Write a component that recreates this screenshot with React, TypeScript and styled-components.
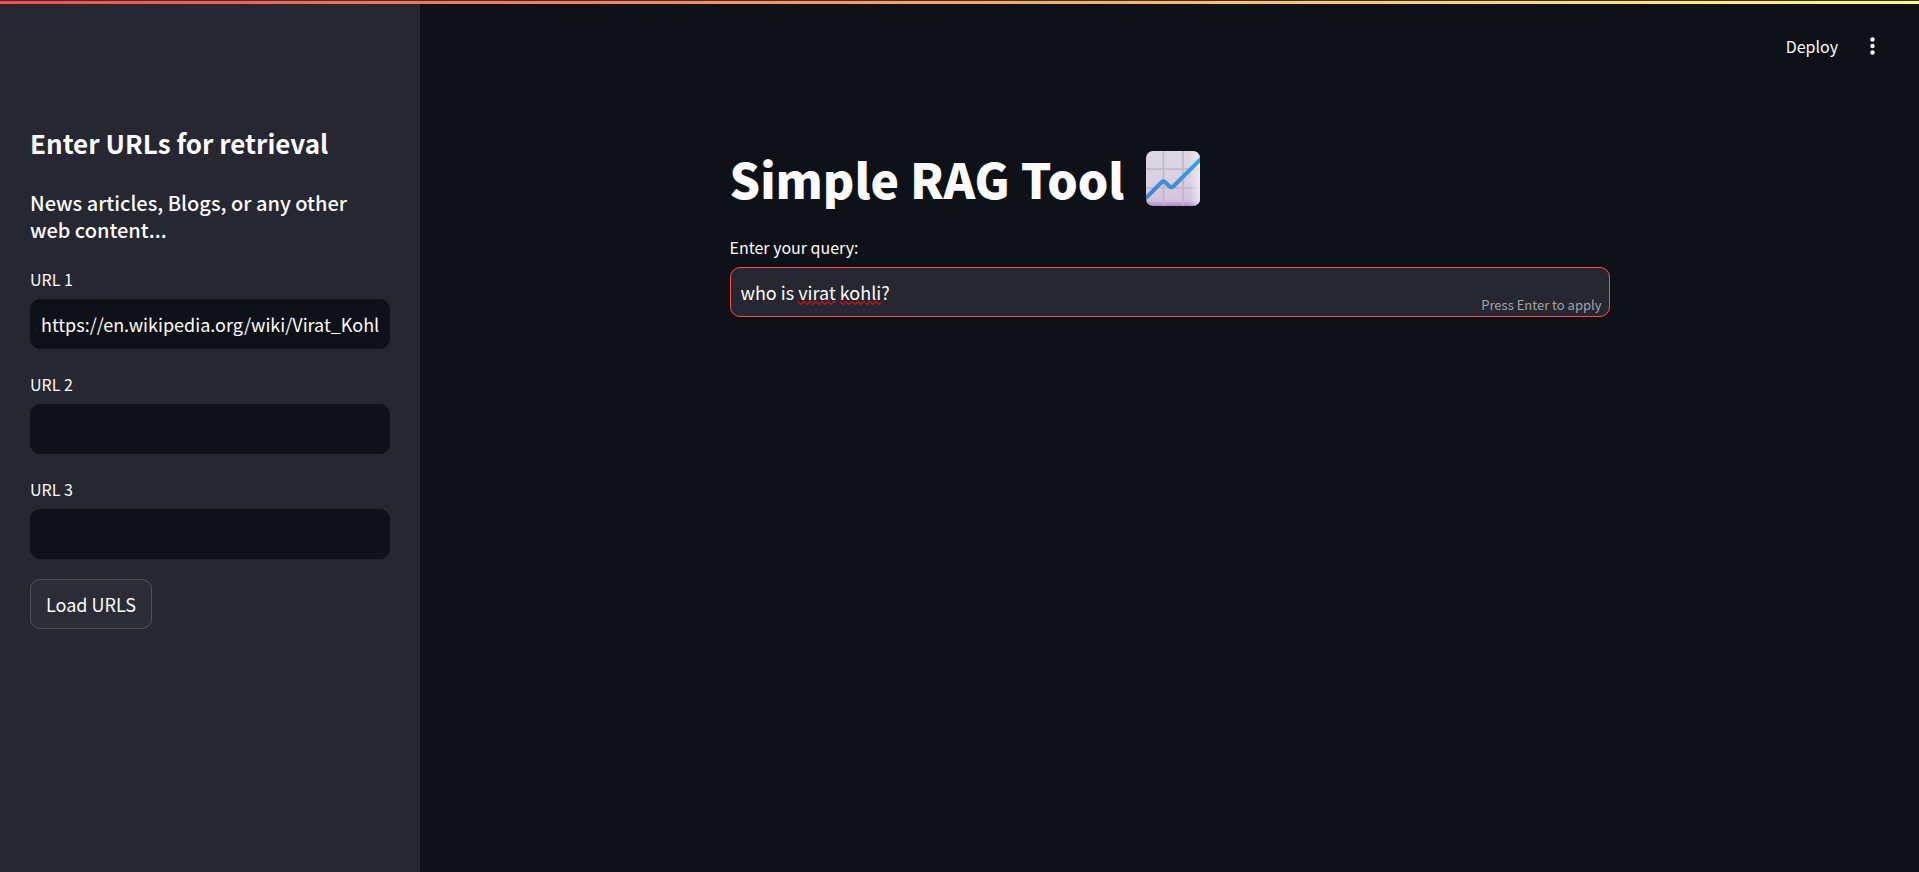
import React, { useState } from 'react';
import styled, { createGlobalStyle } from 'styled-components';

const GlobalStyle = createGlobalStyle`
  *, *::before, *::after { box-sizing: border-box; }
  body {
    margin: 0;
    background: #0e1117;
    color: #fafafa;
    font-family: "Noto Sans CJK SC", "Noto Sans", sans-serif;
    font-size: 18px;
  }
  h1, h2, h3 { margin: 0; }
`;

const Page = styled.div`
  position: relative;
  display: flex;
  min-height: 100vh;
`;

const TopLine = styled.div`
  position: absolute;
  top: 0;
  left: 0;
  right: 0;
  height: 4px;
  border-top: 1px solid #34353c;
  background: linear-gradient(90deg, #ff4b4b, #fffd80);
`;

const Sidebar = styled.aside`
  flex: 0 0 420px;
  display: flex;
  flex-direction: column;
  align-items: stretch;
  padding: 120px 30px 30px;
  background: #262730;
`;

const SidebarTitle = styled.h2`
  font-size: 26px;
  line-height: 45px;
  font-weight: 700;
`;

const SidebarSubtitle = styled.h3`
  margin-top: 24px;
  font-size: 20px;
  line-height: 27px;
  font-weight: 500;
`;

const UrlFields = styled.div`
  display: flex;
  flex-direction: column;
  gap: 20px;
  margin: 21px 0 20px;
`;

const Field = styled.div`
  display: flex;
  flex-direction: column;
  gap: 5px;
`;

const Label = styled.label`
  font-size: 16px;
  line-height: 30px;
`;

const TextInput = styled.input<{ $tone: 'dark' | 'light' }>`
  display: block;
  width: 100%;
  height: 50px;
  padding: 0 10px;
  border: 1px solid ${(p) => (p.$tone === 'dark' ? '#0e1117' : '#ff4b4b')};
  border-radius: 10px;
  outline: none;
  background: ${(p) => (p.$tone === 'dark' ? '#0e1117' : '#262730')};
  color: inherit;
  font-family: inherit;
  font-size: 18px;
`;

const LoadButton = styled.button`
  align-self: flex-start;
  height: 50px;
  padding: 0 15px;
  border: 1px solid #51525a;
  border-radius: 10px;
  background: #2b2c36;
  color: inherit;
  font-family: inherit;
  font-size: 18px;
`;

const Main = styled.main`
  flex: 1;
  min-width: 0;
  display: flex;
  flex-direction: column;
`;

const Toolbar = styled.header`
  display: flex;
  justify-content: flex-end;
  align-items: center;
  gap: 12px;
  height: 75px;
  padding: 17px 34px 0;
`;

const ToolbarButton = styled.button`
  display: flex;
  align-items: center;
  justify-content: center;
  height: 35px;
  padding: 0 10px;
  border: 0;
  background: transparent;
  color: inherit;
  font-family: inherit;
  font-size: 16px;
`;

const Content = styled.div`
  width: 100%;
  max-width: 920px;
  margin: 0 auto;
  padding: 63px 20px 40px;
`;

const Title = styled.h1`
  display: flex;
  align-items: center;
  gap: 22px;
  margin-bottom: 14px;
  font-size: 48px;
  line-height: 80px;
  font-weight: 900;
`;

const InputWrap = styled.div`
  position: relative;
`;

const Squiggle = styled.svg`
  position: absolute;
  left: 68px;
  top: 33px;
  pointer-events: none;
`;

const Hint = styled.span`
  position: absolute;
  right: 8px;
  bottom: 2px;
  color: #a3a4a8;
  font-size: 13px;
  line-height: 20px;
  pointer-events: none;
`;

const ChartIcon = () => (
  <svg width="54" height="55" viewBox="0 0 54 55" aria-hidden="true">
    <defs>
      <linearGradient id="paper" x1="0" y1="0" x2="0" y2="1">
        <stop offset="0" stopColor="#dcd8e0" />
        <stop offset="0.55" stopColor="#d9cfe2" />
        <stop offset="0.9" stopColor="#d2c1df" />
        <stop offset="1" stopColor="#a98cc6" />
      </linearGradient>
      <linearGradient id="shine" x1="0" y1="0" x2="1" y2="0">
        <stop offset="0.8" stopColor="#f4eef8" stopOpacity="0" />
        <stop offset="1" stopColor="#f4eef8" stopOpacity="0.8" />
      </linearGradient>
      <linearGradient id="trend" x1="0" y1="1" x2="1" y2="0">
        <stop offset="0" stopColor="#4283d0" />
        <stop offset="1" stopColor="#2fa4e6" />
      </linearGradient>
      <clipPath id="sheet"><rect width="54" height="55" rx="7" /></clipPath>
    </defs>
    <g clipPath="url(#sheet)">
      <rect width="54" height="55" fill="url(#paper)" />
      <path d="M17.5 0V55M37 0V55M0 18H54M0 37H54" stroke="#beb6c4" strokeWidth="1.6" />
      <rect width="54" height="55" fill="url(#shine)" />
      <path d="M-2 49L15.5 31.3Q17.5 29.5 19.5 31.5L23.5 35.4Q25.5 37 27.5 35.2L57 5.8" fill="none" stroke="url(#trend)" strokeWidth="4" />
    </g>
  </svg>
);

const MenuDots = () => (
  <svg width="5" height="18" viewBox="0 0 5 18" fill="#fafafa" aria-hidden="true">
    <circle cx="2.5" cy="2.5" r="2.2" />
    <circle cx="2.5" cy="9" r="2.2" />
    <circle cx="2.5" cy="15.5" r="2.2" />
  </svg>
);

export default function App() {
  const [urls, setUrls] = useState(['https://en.wikipedia.org/wiki/Virat_Kohli', '', '']);
  const [query, setQuery] = useState('who is virat kohli?');

  return (
    <>
      <GlobalStyle />
      <Page>
        <Sidebar>
          <SidebarTitle>Enter URLs for retrieval</SidebarTitle>
          <SidebarSubtitle>News articles, Blogs, or any other web content...</SidebarSubtitle>
          <UrlFields>
            {urls.map((url, i) => (
              <Field key={i}>
                <Label htmlFor={`url-${i}`}>URL {i + 1}</Label>
                <TextInput
                  id={`url-${i}`}
                  type="text"
                  $tone="dark"
                  value={url}
                  onChange={(e) => setUrls(urls.map((u, j) => (j === i ? e.target.value : u)))}
                />
              </Field>
            ))}
          </UrlFields>
          <LoadButton type="button">Load URLS</LoadButton>
        </Sidebar>
        <Main>
          <Toolbar>
            <ToolbarButton type="button">Deploy</ToolbarButton>
            <ToolbarButton type="button" aria-label="Main menu"><MenuDots /></ToolbarButton>
          </Toolbar>
          <Content>
            <Title>Simple RAG Tool <ChartIcon /></Title>
            <Field>
              <Label htmlFor="query">Enter your query:</Label>
              <InputWrap>
                <TextInput
                  id="query"
                  type="text"
                  $tone="light"
                  spellCheck={false}
                  value={query}
                  onChange={(e) => setQuery(e.target.value)}
                />
                <Squiggle width="84" height="6" viewBox="0 0 84 6" fill="none" stroke="#d80f16" strokeWidth="1.2" aria-hidden="true">
                  <path d="M0 1.5L3 4.5L6 1.5L9 4.5L12 1.5L15 4.5L18 1.5L21 4.5L24 1.5L27 4.5L30 1.5L33 4.5L36 1.5L38 3" />
                  <path d="M42 1.5L45 4.5L48 1.5L51 4.5L54 1.5L57 4.5L60 1.5L63 4.5L66 1.5L69 4.5L72 1.5L75 4.5L78 1.5L81 4.5L83 2.5" />
                </Squiggle>
                <Hint>Press Enter to apply</Hint>
              </InputWrap>
            </Field>
          </Content>
        </Main>
        <TopLine />
      </Page>
    </>
  );
}
